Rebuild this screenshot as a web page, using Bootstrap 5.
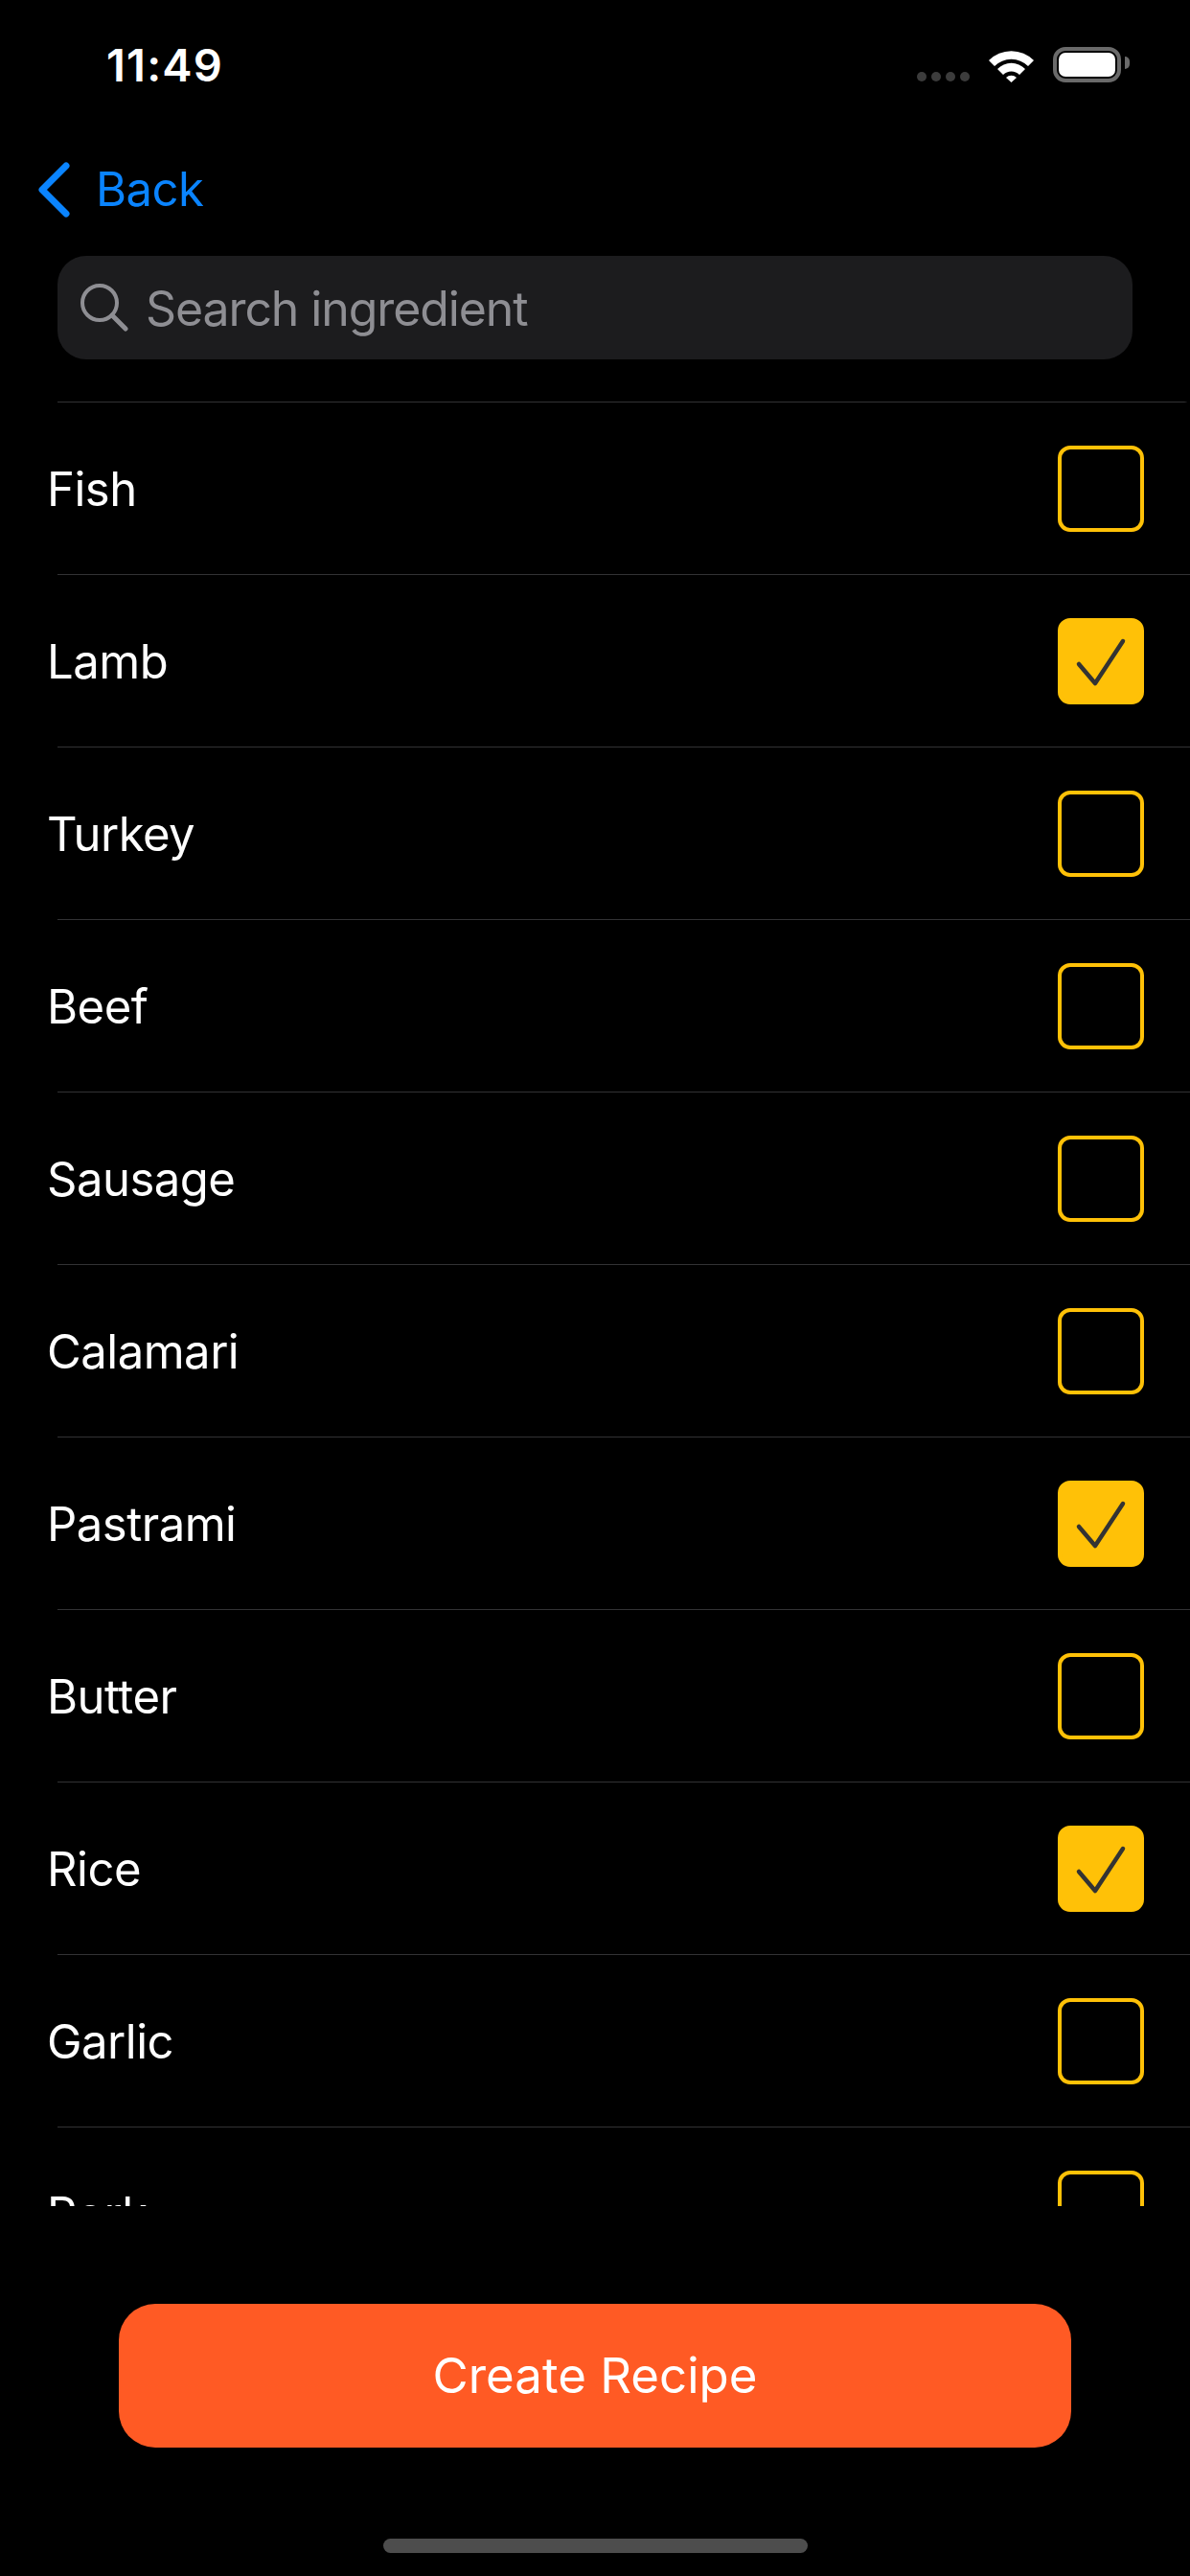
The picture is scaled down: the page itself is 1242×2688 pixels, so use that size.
<!DOCTYPE html>
<html lang="en">
<head>
  <meta charset="UTF-8">
  <meta name="viewport" content="width=device-width, initial-scale=1">
  <title>Search ingredient</title>
  <link href="https://cdn.jsdelivr.net/npm/bootstrap@5.3.0/dist/css/bootstrap.min.css" rel="stylesheet">
  <style>
    html { overflow: hidden; }
    body {
      background-color: #000;
      color: #fff;
      font-family: Inter, "Liberation Sans", sans-serif;
      font-size: 49px;
      letter-spacing: -0.5px;
      width: 1242px;
      height: 2688px;
      overflow: hidden;
    }
    .screen { height: 2688px; }
    .status-bar { height: 136px; padding: 36px 64px 0 111px; }
    .clock { font-size: 47px; font-weight: 600; line-height: 64px; letter-spacing: 1.2px; }
    .signal-dots { gap: 5px; margin-top: 39px; margin-right: 20px; }
    .signal-dots span { width: 10px; height: 10px; border-radius: 50%; background-color: #3c3c3c; }
    .wifi-icon { margin-top: 14px; }
    .battery { width: 71px; height: 37px; margin-left: 20px; margin-right: 8px; margin-top: 13px; padding: 2px; border: 4px solid #6a6a6a; border-radius: 13px; position: relative; }
    .battery-fill { background-color: #fff; height: 100%; border-radius: 7px; }
    .battery::after { content: ""; position: absolute; right: -13px; top: 6px; width: 5px; height: 13px; background-color: #6a6a6a; border-radius: 0 5px 5px 0; }
    .back-row { height: 131px; padding: 0 0 8px 40px; color: #0a84ff; font-size: 49px; gap: 27px; }
    .search-box { height: 108px; margin: 0 60px 44px; padding-left: 24px; gap: 18px; background-color: #1c1c1e; border-radius: 30px; color: #8e8e93; font-size: 50px; letter-spacing: -1.1px; }
    .search-label { margin-top: 2px; }
    .ingredient-list { height: 1883px; overflow: hidden; flex-shrink: 0; }
    .ingredient-list .list-group-item {
      height: 180px;
      flex-shrink: 0;
      margin-left: 60px;
      padding: 1px 48px 0 0;
      background-color: transparent;
      color: #fff;
      border: 0;
      border-top: 1px solid #323234;
      border-radius: 0;
    }
    .item-name { margin-left: -11px; margin-top: 2px; }
    .tick-box { width: 90px; height: 90px; border: 4px solid #ffc107; border-radius: 13px; }
    .tick-box.is-on { background-color: #ffc107; }
    .create-btn {
      width: 994px;
      height: 150px;
      margin: 102px auto 0;
      background-color: #ff5a24;
      border: 0;
      border-radius: 38px;
      color: #fff;
      font-size: 51px;
      letter-spacing: 0;
    }
    .home-bar { width: 443px; height: 15px; margin: 95px auto 0; background-color: #4d4d4d; border-radius: 8px; }
  </style>
</head>
<body>
  <div class="screen d-flex flex-column">
    <div class="status-bar d-flex align-items-start">
      <div class="clock flex-grow-1">11:49</div>
      <div class="signal-dots d-flex"><span></span><span></span><span></span><span></span></div>
      <svg width="47" height="36" viewBox="0 0 47 36" class="wifi-icon">
        <path d="M0 13 A33 33 0 0 1 47 13 L41 19 A25 25 0 0 0 6 19 Z" fill="#fff"/>
        <path d="M9 22 A20 20 0 0 1 38 22 L32 28 A12 12 0 0 0 15 28 Z" fill="#fff"/>
        <path d="M18 31 A8 8 0 0 1 29 31 L23.500 36 Z" fill="#fff"/>
      </svg>
      <div class="battery"><div class="battery-fill"></div></div>
    </div>

    <div class="back-row d-flex align-items-center">
      <svg width="33" height="58" viewBox="0 0 33 58"><path d="M29 4 L4 29 L29 54" fill="none" stroke="#0a84ff" stroke-width="7" stroke-linecap="round" stroke-linejoin="round"/></svg>
      <span>Back</span>
    </div>

    <div class="search-box d-flex align-items-center">
      <svg width="50" height="50" viewBox="0 0 50 50"><circle cx="20" cy="20" r="18" fill="none" stroke="#8e8e93" stroke-width="4"/><path d="M33 33 L47 47" stroke="#8e8e93" stroke-width="5" stroke-linecap="round"/></svg>
      <span class="search-label">Search ingredient</span>
    </div>

    <div class="list-group ingredient-list" id="ingredients"></div>

    <button type="button" class="btn create-btn">Create Recipe</button>
    <div class="home-bar"></div>
  </div>

  <script>
    const ingredients = [
      ["Fish", false], ["Lamb", true], ["Turkey", false], ["Beef", false],
      ["Sausage", false], ["Calamari", false], ["Pastrami", true], ["Butter", false],
      ["Rice", true], ["Garlic", false], ["Pork", false]
    ];
    const tick = '<svg width="82" height="82" viewBox="4 4 82 82"><path d="M22 48 L39 68 L68 24" fill="none" stroke="#333" stroke-width="4.500" stroke-linecap="round" stroke-linejoin="round"/></svg>';
    const list = document.getElementById("ingredients");
    ingredients.forEach(function(item) {
      const row = document.createElement("div");
      row.className = "list-group-item d-flex align-items-center justify-content-between";
      row.innerHTML = '<span class="item-name">' + item[0] + '</span>' +
        '<span class="tick-box d-flex' + (item[1] ? ' is-on' : '') + '">' + (item[1] ? tick : '') + '</span>';
      list.appendChild(row);
    });
  </script>
  <script src="https://cdn.jsdelivr.net/npm/bootstrap@5.3.0/dist/js/bootstrap.bundle.min.js"></script>
</body>
</html>
